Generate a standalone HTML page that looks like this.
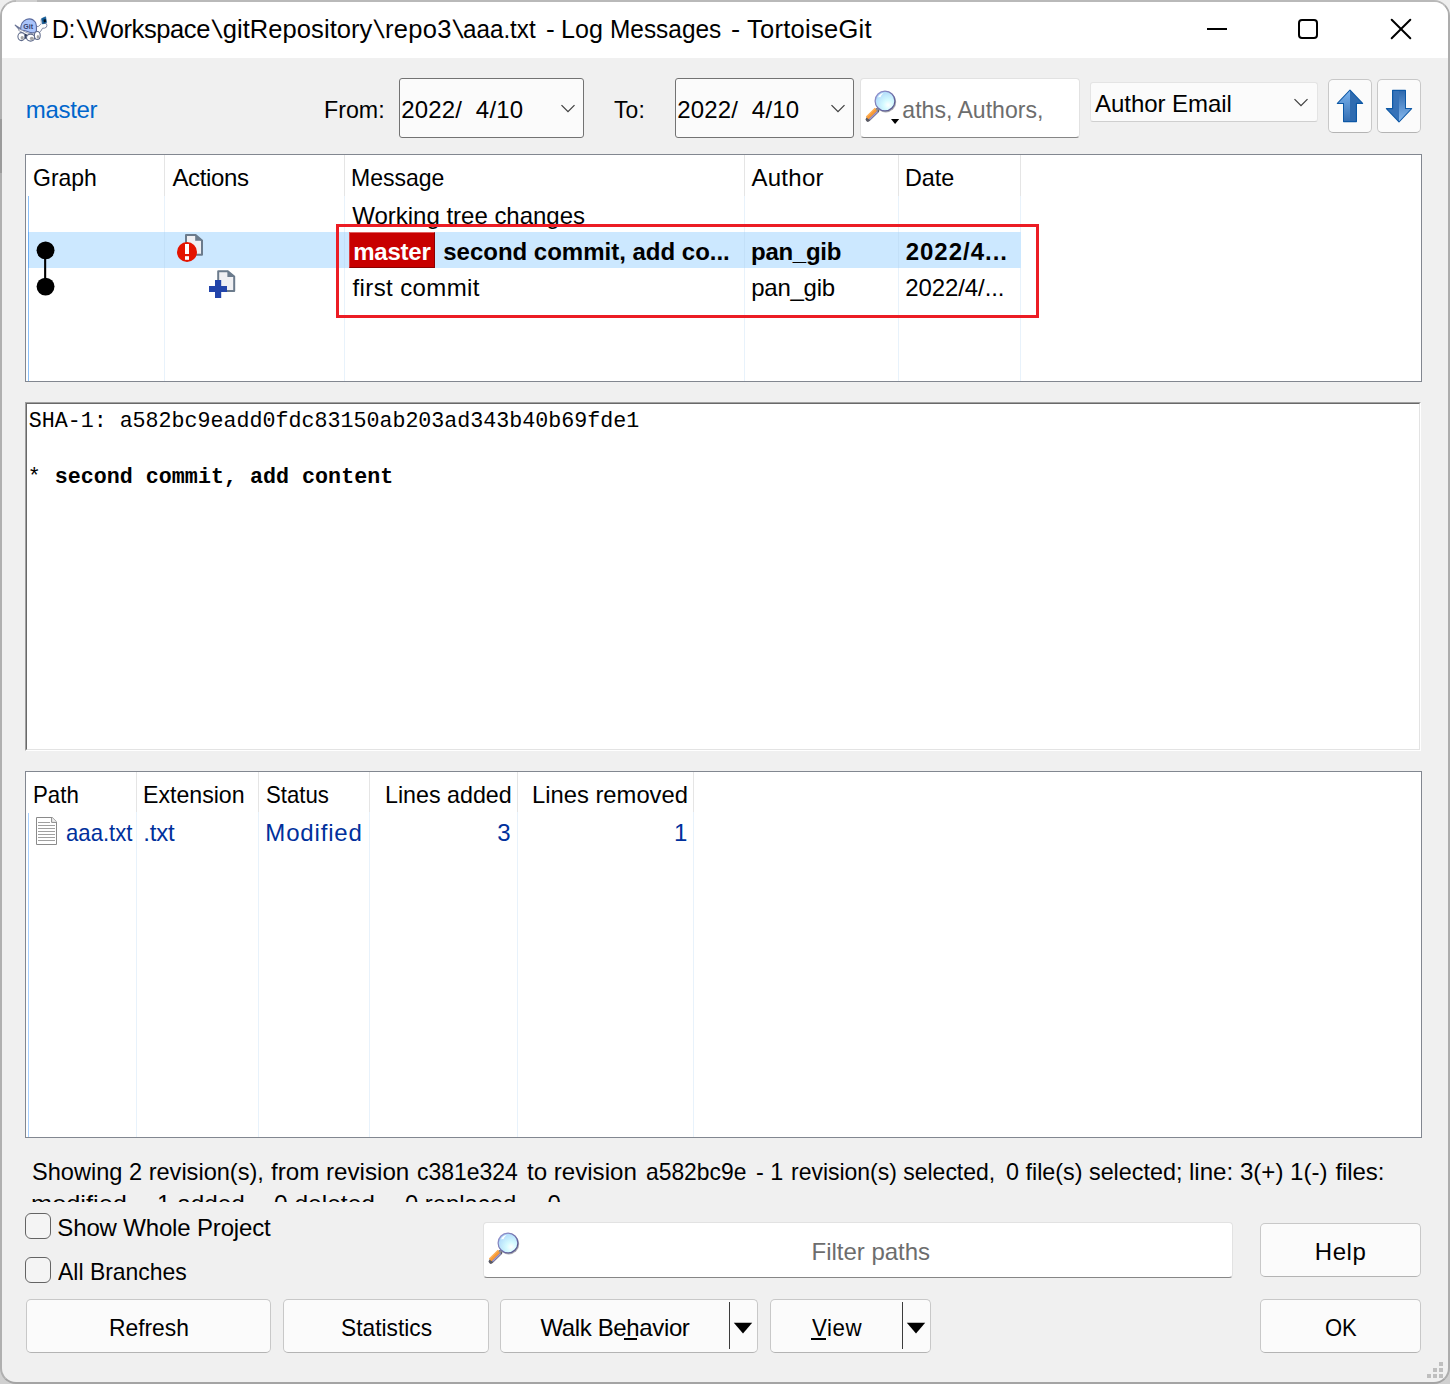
<!DOCTYPE html>
<html lang="en">
<head>
<meta charset="utf-8">
<title>D:\Workspace\gitRepository\repo3\aaa.txt - Log Messages - TortoiseGit</title>
<style>
*{box-sizing:border-box;margin:0;padding:0}
html,body{width:1450px;height:1384px;overflow:hidden}
body{position:relative;background:linear-gradient(180deg,#eeeeee 0%,#e4e4e4 50%,#d0d0d0 100%);font-family:"Liberation Sans",sans-serif;font-size:24px;color:#000}
.a{position:absolute}
.t{position:absolute;white-space:pre;line-height:1;display:block}
.s{font-family:"Liberation Sans",sans-serif}
.m{font-family:"Liberation Mono",monospace}
#win{left:0;top:0;width:1450px;height:1384px;background:#f0f0f0;border:2px solid #b9b9b9;border-right-color:#adadad;border-bottom-color:#a4a4a4;border-left-color:#b0b0b0;border-radius:16px;overflow:hidden}
#titlebar{left:0;top:0;width:1446px;height:56px;background:#fff}
.btn{background:#fbfbfb;border:1px solid #c8c8c8;border-bottom-color:#b4b4b4;border-radius:5px}
.panel{background:#fff;border:1px solid #828790}
.vline{position:absolute;width:1px}
</style>
</head>
<body>
<div id="win" class="a">
  <div id="titlebar" class="a"></div>
</div>


<div class="a" style="left:0;top:119px;width:2px;height:54px;background:#9b9b9b"></div>
<div class="a" style="left:16px;top:0;width:21px;height:2px;background:#cfcfcf"></div>
<!-- app icon -->
<svg class="a" style="left:12px;top:12px" width="40" height="34" viewBox="12 12 40 34">
  <!-- tail -->
  <path d="M15.2 25.2 L21.6 29.2 L20.6 30.8 Z" fill="#e8eaf2" stroke="#6a7496" stroke-width="1.2" stroke-linejoin="round"/>
  <!-- neck + head -->
  <path d="M35.6 26.4 Q38.8 27.6 40.2 24.6 Q41.4 22.8 43.4 23.4 L46.4 23.6 Q47.4 25.4 46.4 27.2 Q44.6 28.6 42.6 28.2 Q41 31.4 38.2 34 L35.6 33 Z" fill="#fdfdfd" stroke="#8088a2" stroke-width="1"/>
  <path d="M36.4 25 V31.4" stroke="#c6c8d0" stroke-width="1.4"/>
  <!-- shell -->
  <path d="M20.6 30 Q20.4 22.2 26.2 19.6 Q31.6 17.4 35.2 22 Q36.8 24.4 36.4 31.6 Q33.4 33.4 29.6 32.2 Q25.4 30.6 20.6 30 Z" fill="#a9c4fb" stroke="#5c6ca0" stroke-width="1.1"/>
  <!-- white belly band -->
  <path d="M18.8 28.8 Q22.6 30.4 26 32.4 Q30 34.6 33.6 33.6 Q36 32.8 37.6 31.4 L38 33.2 Q36 35 33.4 35.6 Q29.6 36.4 25.8 34.4 Q22.4 32.4 18.6 30.4 Z" fill="#fff" stroke="#8a90a6" stroke-width="0.8"/>
  <!-- dark underside -->
  <path d="M24.4 33.6 L28.4 35.6 L27.6 39.4 L25 38.4 Z" fill="#27324e"/>
  <path d="M34.2 35.4 L35.4 38.6 L33.6 39 Z" fill="#27324e"/>
  <!-- legs -->
  <ellipse cx="21.4" cy="36.6" rx="3.5" ry="4" fill="#fff" stroke="#5e6a8a" stroke-width="1.05"/>
  <ellipse cx="30.6" cy="37.6" rx="4.1" ry="3.5" fill="#fff" stroke="#5e6a8a" stroke-width="1.05"/>
  <ellipse cx="37.3" cy="35.5" rx="2.9" ry="4" fill="#fff" stroke="#5e6a8a" stroke-width="1.05"/>
  <ellipse cx="22.2" cy="37.8" rx="1.6" ry="1.9" fill="#a4a4a4"/>
  <ellipse cx="31.8" cy="38.4" rx="2" ry="1.6" fill="#a4a4a4"/>
  <ellipse cx="37.9" cy="36.8" rx="1.2" ry="1.9" fill="#a4a4a4"/>
  <!-- cube -->
  <path d="M40.2 19.8 L41.8 18.6 L42.8 23.6 L41 24.4 Z" fill="#c4c8d6"/>
  <path d="M41.6 18.6 L45.6 16.8 L46.6 22.4 L42.6 24 Z" fill="#10609e" stroke="#0b4c84" stroke-width="0.6"/>
  <path d="M43.4 19.8 L45.6 19 L46 21.8 L43.9 22.6 Z" fill="#020c18"/>
  <text x="23.2" y="28.8" font-family="'Liberation Sans',sans-serif" font-size="7.8" font-weight="700" fill="#36426e" textLength="9.8" lengthAdjust="spacingAndGlyphs">Git</text>
</svg>

<!-- title bar controls -->
<div class="a" style="left:1207px;top:28px;width:20px;height:2px;background:#000"></div>
<div class="a" style="left:1298px;top:19px;width:20px;height:20px;border:2px solid #000;border-radius:4px"></div>
<svg class="a" style="left:1389px;top:17px" width="24" height="24" viewBox="0 0 24 24"><path d="M2.7 2.7 L21.3 21.3 M21.3 2.7 L2.7 21.3" stroke="#000" stroke-width="2" stroke-linecap="round" fill="none"/></svg>

<!-- toolbar row -->
<div class="a" style="left:399px;top:78px;width:185px;height:60px;background:#fbfbfb;border:1px solid #737373;border-radius:3px"></div>
<svg class="a" style="left:559.5px;top:103px" width="16" height="11" viewBox="0 0 16 11"><path d="M1.5 2.1 L8 8.6 L14.5 2.1" stroke="#404040" stroke-width="1.3" fill="none"/></svg>
<div class="a" style="left:675px;top:78px;width:179px;height:60px;background:#fbfbfb;border:1px solid #737373;border-radius:3px"></div>
<svg class="a" style="left:829.5px;top:103px" width="16" height="11" viewBox="0 0 16 11"><path d="M1.5 2.1 L8 8.6 L14.5 2.1" stroke="#404040" stroke-width="1.3" fill="none"/></svg>

<!-- search box -->
<div class="a" id="search" style="left:860px;top:78px;width:220px;height:60px;background:#fff;border:1px solid #e2e2e2;border-bottom:1px solid #868686;border-radius:4px;overflow:hidden">
</div>

<!-- combo -->
<div class="a" style="left:1090px;top:82px;width:228px;height:40px;background:#fbfbfb;border:1px solid #e4e4e4;border-bottom-color:#cfcfcf;border-radius:3px"></div>
<svg class="a" style="left:1293.4px;top:97.2px" width="16" height="11" viewBox="0 0 16 11"><path d="M1.5 2.1 L8 8.6 L14.5 2.1" stroke="#404040" stroke-width="1.3" fill="none"/></svg>

<!-- up/down buttons -->
<div class="a btn" style="left:1328px;top:79px;width:44px;height:54px"></div>
<div class="a btn" style="left:1377px;top:79px;width:44px;height:54px"></div>


<svg class="a" style="left:1328px;top:79px" width="94" height="54" viewBox="1328 79 94 54">
  <defs>
    <linearGradient id="gl" x1="0" y1="0" x2="0" y2="1"><stop offset="0" stop-color="#7ab3ef"/><stop offset="1" stop-color="#356fb3"/></linearGradient>
    <linearGradient id="gd" x1="0" y1="0" x2="0" y2="1"><stop offset="0" stop-color="#2e69ae"/><stop offset="1" stop-color="#86b8ee"/></linearGradient>
  </defs>
  <!-- up -->
  <path d="M1350 90.2 L1362.6 103.4 H1356.4 V121.6 H1343.6 V103.4 H1337.4 Z" fill="#2f6bb0" stroke="#0d58a6" stroke-width="1.2" stroke-linejoin="round"/>
  <path d="M1350 90.8 L1338.4 103 H1344 V121 H1350 Z" fill="url(#gl)"/>
  <!-- down -->
  <path d="M1399 121.8 L1411.6 108.6 H1405.4 V90.4 H1392.6 V108.6 H1386.4 Z" fill="#3672b8" stroke="#0d58a6" stroke-width="1.2" stroke-linejoin="round"/>
  <path d="M1399 121.2 L1410.6 109 H1405 V91 H1399 Z" fill="url(#gd)"/>
</svg>

<!-- log list panel -->
<div class="a panel" id="loglist" style="left:25px;top:154px;width:1397px;height:228px"></div>

<!-- log list column dividers -->
<div class="vline" style="left:164px;top:155px;height:41px;background:#e5e5e5"></div>
<div class="vline" style="left:344px;top:155px;height:41px;background:#e5e5e5"></div>
<div class="vline" style="left:744px;top:155px;height:41px;background:#e5e5e5"></div>
<div class="vline" style="left:898px;top:155px;height:41px;background:#e5e5e5"></div>
<div class="vline" style="left:1020px;top:155px;height:41px;background:#e5e5e5"></div>
<div class="vline" style="left:164px;top:196px;height:185px;background:#e8f2fb"></div>
<div class="vline" style="left:344px;top:196px;height:185px;background:#e8f2fb"></div>
<div class="vline" style="left:744px;top:196px;height:185px;background:#e8f2fb"></div>
<div class="vline" style="left:898px;top:196px;height:185px;background:#e8f2fb"></div>
<div class="vline" style="left:1020px;top:196px;height:185px;background:#e8f2fb"></div>
<div class="vline" style="left:28px;top:196px;height:185px;background:#8cc0f8"></div>
<div class="a" style="left:28px;top:232px;width:993px;height:36px;background:#cce8ff"></div>
<div class="vline" style="left:28px;top:232px;height:36px;background:#6eb0f6"></div>
<div class="vline" style="left:164px;top:232px;height:36px;background:#c3e0f8"></div>
<div class="vline" style="left:344px;top:232px;height:36px;background:#c3e0f8"></div>
<div class="vline" style="left:744px;top:232px;height:36px;background:#c3e0f8"></div>
<div class="vline" style="left:898px;top:232px;height:36px;background:#c3e0f8"></div>
<!-- graph -->
<svg class="a" style="left:30px;top:236px" width="32" height="66" viewBox="0 0 32 66">
  <line x1="15.15" y1="14" x2="15.15" y2="50" stroke="#000" stroke-width="2.1"/>
  <circle cx="15.55" cy="14.35" r="8.95" fill="#000"/>
  <circle cx="15.55" cy="50.6" r="8.95" fill="#000"/>
</svg>
<!-- action icons -->
<svg class="a" style="left:176px;top:232px" width="64" height="70" viewBox="176 232 64 70">
  <!-- modified -->
  <path d="M186 235 H195.6 L202 240.4 V254.8 H186 Z" fill="#f0f0f3" stroke="#6b7b8c" stroke-width="2" stroke-linejoin="round"/>
  <path d="M195.2 234.4 L202.8 240.8 H195.2 Z" fill="#6b7b8c"/>
  <circle cx="187" cy="252" r="10" fill="#e41400"/>
  <rect x="185" y="244" width="4" height="10" fill="#fff"/>
  <rect x="185" y="256.2" width="4" height="3.6" fill="#fff"/>
  <!-- added -->
  <path d="M218.2 271.2 H227.8 L234.2 276.6 V291 H218.2 Z" fill="#f0f0f3" stroke="#6b7b8c" stroke-width="2" stroke-linejoin="round"/>
  <path d="M227.4 270.6 L235 277 H227.4 Z" fill="#6b7b8c"/>
  <rect x="215" y="280" width="6.2" height="18" fill="#2244aa"/>
  <rect x="209" y="286" width="18" height="6" fill="#2244aa"/>
</svg>
<!-- master badge -->
<div class="a" style="left:349px;top:232px;width:86px;height:36px;background:#c80000;border-top:1px solid #e06060;border-left:1px solid #d84040;border-right:1px solid #8c0000;border-bottom:1px solid #8c0000"></div>

<!-- message panel -->
<div class="a" id="msgpanel" style="left:25px;top:402px;width:1396px;height:349px;background:#fff;border:1px solid;border-color:#a0a0a0 #ffffff #ffffff #a0a0a0"><div style="width:100%;height:100%;border:1px solid;border-color:#696969 #e3e3e3 #e3e3e3 #696969"></div></div>

<!-- file list panel -->
<div class="a panel" id="filelist" style="left:25px;top:771px;width:1397px;height:367px"></div>


<div class="vline" style="left:136px;top:772px;height:40px;background:#e5e5e5"></div>
<div class="vline" style="left:258px;top:772px;height:40px;background:#e5e5e5"></div>
<div class="vline" style="left:369px;top:772px;height:40px;background:#e5e5e5"></div>
<div class="vline" style="left:517px;top:772px;height:40px;background:#e5e5e5"></div>
<div class="vline" style="left:693px;top:772px;height:40px;background:#e5e5e5"></div>
<div class="vline" style="left:136px;top:812px;height:325px;background:#e8f2fb"></div>
<div class="vline" style="left:258px;top:812px;height:325px;background:#e8f2fb"></div>
<div class="vline" style="left:369px;top:812px;height:325px;background:#e8f2fb"></div>
<div class="vline" style="left:517px;top:812px;height:325px;background:#e8f2fb"></div>
<div class="vline" style="left:693px;top:812px;height:325px;background:#e8f2fb"></div>
<div class="vline" style="left:28px;top:813px;height:324px;background:#a9d1ff"></div>
<svg class="a" style="left:34px;top:815px" width="26" height="32" viewBox="34 815 26 32">
  <path d="M36.5 817.5 H52.2 L56.5 821.8 V844.5 H36.5 Z" fill="#fff" stroke="#8a8a8a" stroke-width="1"/>
  <path d="M51.6 817.5 V822.4 H56.5" fill="#eee" stroke="#8a8a8a" stroke-width="1"/>
  <g stroke="#a0a0a0" stroke-width="1">
    <line x1="38" y1="822.5" x2="50" y2="822.5"/>
    <line x1="38" y1="825.5" x2="55" y2="825.5"/>
    <line x1="38" y1="828.5" x2="55" y2="828.5"/>
    <line x1="38" y1="831.5" x2="55" y2="831.5"/>
    <line x1="38" y1="834.5" x2="55" y2="834.5"/>
    <line x1="38" y1="837.5" x2="55" y2="837.5"/>
    <line x1="38" y1="840.5" x2="55" y2="840.5"/>
  </g>
</svg>

<!-- bottom -->
<div class="a" style="left:483px;top:1222px;width:750px;height:56px;background:#fff;border:1px solid #e2e2e2;border-bottom:1px solid #868686;border-radius:4px"></div>
<div class="a btn" style="left:1260px;top:1223px;width:161px;height:54px"></div>
<div class="a btn" style="left:26px;top:1299px;width:245px;height:54px"></div>
<div class="a btn" style="left:283px;top:1299px;width:206px;height:54px"></div>
<div class="a btn" style="left:500px;top:1299px;width:258px;height:54px"></div>
<div class="a btn" style="left:770px;top:1299px;width:161px;height:54px"></div>
<div class="a btn" style="left:1260px;top:1299px;width:161px;height:54px"></div>

<div class="a" style="left:25px;top:1213px;width:26px;height:26px;border:1.4px solid #646464;border-radius:6px;background:#f4f4f4"></div>
<div class="a" style="left:25px;top:1257px;width:26px;height:26px;border:1.4px solid #646464;border-radius:6px;background:#f4f4f4"></div>


<svg class="a" style="left:862px;top:88px" width="40" height="38" viewBox="862 88 40 38">
  <defs>
    <radialGradient id="lens" cx="0.66" cy="0.7" r="0.8"><stop offset="0" stop-color="#ffffff"/><stop offset="0.3" stop-color="#d6fbff"/><stop offset="1" stop-color="#a8d4fa"/></radialGradient>
    <linearGradient id="ring" x1="0" y1="0" x2="1" y2="1"><stop offset="0" stop-color="#9a9ad6"/><stop offset="1" stop-color="#4c4c84"/></linearGradient>
    <g id="magn">
      <line x1="877" y1="110.6" x2="868" y2="119.4" stroke="#5a5a64" stroke-width="4.8" stroke-linecap="round"/>
      <line x1="877.6" y1="111.4" x2="869.4" y2="119.4" stroke="#9a96d8" stroke-width="1.6"/>
      <line x1="876.2" y1="109.2" x2="867.2" y2="118" stroke="#f89b38" stroke-width="3.6"/>
      <line x1="875.2" y1="108.2" x2="866.6" y2="116.6" stroke="#ffb45e" stroke-width="1.2"/>
      <line x1="879.2" y1="107.6" x2="876.4" y2="110.4" stroke="#8e8e98" stroke-width="2.6"/>
      <circle cx="885.8" cy="102" r="10.4" fill="#6e6e7a" opacity="0.6"/>
      <circle cx="885" cy="101" r="9.9" fill="url(#lens)" stroke="url(#ring)" stroke-width="1.25"/>
      <path d="M878 97.6 Q879.4 93.6 883.6 93 Q881 95 880.4 97.2 Q879 96.6 878 97.6 Z" fill="#fff"/>
    </g>
  </defs>
  <use href="#magn"/>
  <path d="M891 119 H899.2 L895.1 124 Z" fill="#000"/>
</svg>
<svg class="a" style="left:485px;top:1230.4px" width="38" height="38" viewBox="862 88 38 38">
  <use href="#magn"/>
</svg>


<div class="vline" style="left:729px;top:1302px;height:47px;background:#3c3c3c"></div>
<div class="vline" style="left:902px;top:1302px;height:47px;background:#3c3c3c"></div>
<svg class="a" style="left:733px;top:1322px" width="20" height="13" viewBox="0 0 20 13"><path d="M0.8 0.8 H19.2 L10 11.6 Z" fill="#000"/></svg>
<svg class="a" style="left:906px;top:1322px" width="20" height="13" viewBox="0 0 20 13"><path d="M0.8 0.8 H19.2 L10 11.6 Z" fill="#000"/></svg>
<div class="a" style="left:811px;top:1338px;width:15px;height:1.5px;background:#000"></div>
<div class="a" style="left:624px;top:1338px;width:13px;height:1.5px;background:#000"></div>
<!-- resize grip -->
<svg class="a" style="left:1427px;top:1362px" width="16" height="16" viewBox="0 0 16 16" fill="#bfbfbf">
  <rect x="12" y="0" width="4" height="4"/>
  <rect x="6" y="6" width="4" height="4"/><rect x="12" y="6" width="4" height="4"/>
  <rect x="0" y="12" width="4" height="4"/><rect x="6" y="12" width="4" height="4"/><rect x="12" y="12" width="4" height="4"/>
</svg>

<span class="t s" style="left:52.49px;top:16.81px;font-size:25.5px;font-weight:400;color:#000;letter-spacing:0.000px;transform:scaleX(0.9134);transform-origin:0 0;">D:</span>
<span class="t s" style="left:75.64px;top:16.81px;font-size:25.5px;font-weight:400;color:#000;letter-spacing:0.000px;transform:skewX(11deg) scaleX(1.08);transform-origin:0 0;">\</span>
<span class="t s" style="left:86.50px;top:16.81px;font-size:25.5px;font-weight:400;color:#000;letter-spacing:-0.399px;">Workspace</span>
<span class="t s" style="left:211.33px;top:16.81px;font-size:25.5px;font-weight:400;color:#000;letter-spacing:0.000px;transform:skewX(11deg) scaleX(1.08);transform-origin:0 0;">\</span>
<span class="t s" style="left:222.68px;top:16.81px;font-size:25.5px;font-weight:400;color:#000;letter-spacing:0.072px;">gitRepository</span>
<span class="t s" style="left:373.28px;top:16.81px;font-size:25.5px;font-weight:400;color:#000;letter-spacing:0.000px;transform:skewX(11deg) scaleX(1.08);transform-origin:0 0;">\</span>
<span class="t s" style="left:384.97px;top:16.81px;font-size:25.5px;font-weight:400;color:#000;letter-spacing:0.307px;">repo3</span>
<span class="t s" style="left:452.21px;top:16.81px;font-size:25.5px;font-weight:400;color:#000;letter-spacing:0.000px;transform:skewX(11deg) scaleX(1.08);transform-origin:0 0;">\</span>
<span class="t s" style="left:463.30px;top:16.81px;font-size:25.5px;font-weight:400;color:#000;letter-spacing:0.000px;transform:scaleX(0.9493);transform-origin:0 0;">aaa.txt </span>
<span class="t s" style="left:546.49px;top:16.81px;font-size:25.5px;font-weight:400;color:#000;letter-spacing:0.000px;transform:scaleX(1.0304);transform-origin:0 0;">- </span>
<span class="t s" style="left:561.33px;top:16.81px;font-size:25.5px;font-weight:400;color:#000;letter-spacing:0.000px;transform:scaleX(0.9836);transform-origin:0 0;">Log </span>
<span class="t s" style="left:610.40px;top:16.81px;font-size:25.5px;font-weight:400;color:#000;letter-spacing:0.000px;transform:scaleX(0.9571);transform-origin:0 0;">Messages </span>
<span class="t s" style="left:730.64px;top:16.81px;font-size:25.5px;font-weight:400;color:#000;letter-spacing:0.000px;transform:scaleX(1.0775);transform-origin:0 0;">- </span>
<span class="t s" style="left:747.00px;top:16.81px;font-size:25.5px;font-weight:400;color:#000;letter-spacing:0.263px;">TortoiseGit</span>
<span class="t s" style="left:25.80px;top:98.08px;font-size:24px;font-weight:400;color:#0066cc;letter-spacing:-0.329px;">master</span>
<span class="t s" style="left:324.39px;top:98.08px;font-size:24px;font-weight:400;color:#000;letter-spacing:0.000px;transform:scaleX(0.9667);transform-origin:0 0;">From:</span>
<span class="t s" style="left:401.30px;top:98.08px;font-size:24px;font-weight:400;color:#000;letter-spacing:0.168px;">2022/  4/10</span>
<span class="t s" style="left:613.59px;top:98.08px;font-size:24px;font-weight:400;color:#000;letter-spacing:0.132px;transform:scaleX(0.9518);transform-origin:0 0;">To:</span>
<span class="t s" style="left:677.30px;top:98.08px;font-size:24px;font-weight:400;color:#000;letter-spacing:0.168px;">2022/  4/10</span>
<span class="t s" style="left:887.39px;top:98.08px;font-size:24px;font-weight:400;color:#6d6d6d;letter-spacing:0.000px;clip-path:inset(-5px -5px -5px 15.5px);transform:scaleX(0.9604);transform-origin:0 0;">Paths, Authors,</span>
<span class="t s" style="left:1095.12px;top:92.08px;font-size:24px;font-weight:400;color:#000;letter-spacing:-0.065px;">Author Email</span>
<span class="t s" style="left:33.29px;top:166.08px;font-size:24px;font-weight:400;color:#000;letter-spacing:0.000px;transform:scaleX(0.9579);transform-origin:0 0;">Graph</span>
<span class="t s" style="left:172.45px;top:166.08px;font-size:24px;font-weight:400;color:#000;letter-spacing:-0.353px;">Actions</span>
<span class="t s" style="left:351.38px;top:166.08px;font-size:24px;font-weight:400;color:#000;letter-spacing:0.000px;transform:scaleX(0.9593);transform-origin:0 0;">Message</span>
<span class="t s" style="left:751.45px;top:166.08px;font-size:24px;font-weight:400;color:#000;letter-spacing:0.276px;">Author</span>
<span class="t s" style="left:905.49px;top:166.08px;font-size:24px;font-weight:400;color:#000;letter-spacing:0.000px;transform:scaleX(0.9736);transform-origin:0 0;">Date</span>
<span class="t s" style="left:352.29px;top:204.08px;font-size:24px;font-weight:400;color:#000;letter-spacing:-0.014px;">Working tree changes</span>
<span class="t s" style="left:353.23px;top:240.08px;font-size:24px;font-weight:700;color:#fff;letter-spacing:-0.229px;">master</span>
<span class="t s" style="left:443.23px;top:240.08px;font-size:24px;font-weight:700;color:#000;letter-spacing:-0.007px;">second commit, add co...</span>
<span class="t s" style="left:751.10px;top:240.08px;font-size:24px;font-weight:700;color:#000;letter-spacing:-0.297px;">pan_gib</span>
<span class="t s" style="left:905.66px;top:240.08px;font-size:24px;font-weight:700;color:#000;letter-spacing:0.994px;">2022/4...</span>
<span class="t s" style="left:352.48px;top:276.08px;font-size:24px;font-weight:400;color:#000;letter-spacing:0.396px;">first commit</span>
<span class="t s" style="left:751.16px;top:276.08px;font-size:24px;font-weight:400;color:#000;letter-spacing:-0.232px;">pan_gib</span>
<span class="t s" style="left:905.35px;top:276.08px;font-size:24px;font-weight:400;color:#000;letter-spacing:-0.110px;">2022/4/...</span>
<span class="t m" style="left:28.71px;top:410.79px;font-size:21.67px;font-weight:400;color:#000;letter-spacing:-0.007px;">SHA-1: a582bc9eadd0fdc83150ab203ad343b40b69fde1</span>
<span class="t m" style="left:27.70px;top:466.79px;font-size:21.67px;font-weight:400;color:#000;letter-spacing:0.000px;">* </span>
<span class="t m" style="left:54.63px;top:466.79px;font-size:21.67px;font-weight:700;color:#000;letter-spacing:0.027px;">second commit, add content</span>
<span class="t s" style="left:33.30px;top:783.08px;font-size:24px;font-weight:400;color:#000;letter-spacing:0.000px;transform:scaleX(0.9272);transform-origin:0 0;">Path</span>
<span class="t s" style="left:143.46px;top:783.08px;font-size:24px;font-weight:400;color:#000;letter-spacing:0.000px;transform:scaleX(0.9638);transform-origin:0 0;">Extension</span>
<span class="t s" style="left:265.54px;top:783.08px;font-size:24px;font-weight:400;color:#000;letter-spacing:0.000px;transform:scaleX(0.9249);transform-origin:0 0;">Status</span>
<span class="t s" style="left:384.66px;top:783.08px;font-size:24px;font-weight:400;color:#000;letter-spacing:0.000px;transform:scaleX(0.9687);transform-origin:0 0;">Lines added</span>
<span class="t s" style="left:532.36px;top:783.08px;font-size:24px;font-weight:400;color:#000;letter-spacing:0.000px;transform:scaleX(0.9906);transform-origin:0 0;">Lines removed</span>
<span class="t s" style="left:65.55px;top:821.08px;font-size:24px;font-weight:400;color:#00309c;letter-spacing:0.000px;transform:scaleX(0.9227);transform-origin:0 0;">aaa.txt</span>
<span class="t s" style="left:143.22px;top:821.08px;font-size:24px;font-weight:400;color:#00309c;letter-spacing:-0.170px;">.txt</span>
<span class="t s" style="left:265.36px;top:821.08px;font-size:24px;font-weight:400;color:#00309c;letter-spacing:0.825px;">Modified</span>
<span class="t s" style="left:497.27px;top:821.08px;font-size:24px;font-weight:400;color:#00309c;letter-spacing:0.000px;">3</span>
<span class="t s" style="left:673.89px;top:821.08px;font-size:24px;font-weight:400;color:#00309c;letter-spacing:0.000px;">1</span>
<span class="t s" style="left:31.64px;top:1160.08px;font-size:24px;font-weight:400;color:#000;letter-spacing:0.000px;transform:scaleX(0.9822);transform-origin:0 0;">Showing 2 revision(s), </span>
<span class="t s" style="left:270.54px;top:1160.08px;font-size:24px;font-weight:400;color:#000;letter-spacing:0.000px;transform:scaleX(1.0068);transform-origin:0 0;">from revision </span>
<span class="t s" style="left:417.35px;top:1160.08px;font-size:24px;font-weight:400;color:#000;letter-spacing:0.000px;transform:scaleX(0.9568);transform-origin:0 0;">c381e324 </span>
<span class="t s" style="left:527.47px;top:1160.08px;font-size:24px;font-weight:400;color:#000;letter-spacing:0.000px;transform:scaleX(1.0039);transform-origin:0 0;">to revision </span>
<span class="t s" style="left:645.68px;top:1160.08px;font-size:24px;font-weight:400;color:#000;letter-spacing:0.000px;transform:scaleX(0.952);transform-origin:0 0;">a582bc9e </span>
<span class="t s" style="left:755.64px;top:1160.08px;font-size:24px;font-weight:400;color:#000;letter-spacing:0.000px;transform:scaleX(0.9751);transform-origin:0 0;">- 1 </span>
<span class="t s" style="left:791.37px;top:1160.08px;font-size:24px;font-weight:400;color:#000;letter-spacing:0.000px;transform:scaleX(0.9567);transform-origin:0 0;">revision(s) selected, </span>
<span class="t s" style="left:1005.59px;top:1160.08px;font-size:24px;font-weight:400;color:#000;letter-spacing:0.000px;transform:scaleX(0.9722);transform-origin:0 0;">0 file(s) selected; </span>
<span class="t s" style="left:1189.37px;top:1160.08px;font-size:24px;font-weight:400;color:#000;letter-spacing:0.000px;transform:scaleX(1.0041);transform-origin:0 0;">line: 3(+) 1(-) </span>
<span class="t s" style="left:1335.48px;top:1160.08px;font-size:24px;font-weight:400;color:#000;letter-spacing:-0.082px;">files:</span>
<span class="t s" style="left:31.47px;top:1192.08px;font-size:24px;font-weight:400;color:#000;letter-spacing:0.000px;clip-path:inset(0 0 14.1px 0);transform:scaleX(1.057);transform-origin:0 0;">modified </span>
<span class="t s" style="left:135.47px;top:1196.08px;font-size:24px;font-weight:400;color:#000;letter-spacing:0.000px;clip-path:inset(0 0 18.1px 0);transform:scaleX(1.0274);transform-origin:0 0;">= </span>
<span class="t s" style="left:157.33px;top:1192.08px;font-size:24px;font-weight:400;color:#000;letter-spacing:0.000px;clip-path:inset(0 0 14.1px 0);transform:scaleX(1.011);transform-origin:0 0;">1 added </span>
<span class="t s" style="left:252.47px;top:1196.08px;font-size:24px;font-weight:400;color:#000;letter-spacing:0.000px;clip-path:inset(0 0 18.1px 0);transform:scaleX(1.0274);transform-origin:0 0;">= </span>
<span class="t s" style="left:274.32px;top:1192.08px;font-size:24px;font-weight:400;color:#000;letter-spacing:0.000px;clip-path:inset(0 0 14.1px 0);transform:scaleX(1.0219);transform-origin:0 0;">0 deleted </span>
<span class="t s" style="left:382.47px;top:1196.08px;font-size:24px;font-weight:400;color:#000;letter-spacing:0.000px;clip-path:inset(0 0 18.1px 0);transform:scaleX(1.0274);transform-origin:0 0;">= </span>
<span class="t s" style="left:404.65px;top:1192.08px;font-size:24px;font-weight:400;color:#000;letter-spacing:0.000px;clip-path:inset(0 0 14.1px 0);transform:scaleX(0.9918);transform-origin:0 0;">0 replaced </span>
<span class="t s" style="left:524.47px;top:1196.08px;font-size:24px;font-weight:400;color:#000;letter-spacing:0.000px;clip-path:inset(0 0 18.1px 0);transform:scaleX(1.0274);transform-origin:0 0;">= </span>
<span class="t s" style="left:547.41px;top:1192.08px;font-size:24px;font-weight:400;color:#000;letter-spacing:0.000px;clip-path:inset(0 0 14.1px 0);">0</span>
<span class="t s" style="left:57.35px;top:1216.08px;font-size:24px;font-weight:400;color:#000;letter-spacing:-0.162px;">Show Whole Project</span>
<span class="t s" style="left:58.35px;top:1260.08px;font-size:24px;font-weight:400;color:#000;letter-spacing:0.000px;transform:scaleX(0.9563);transform-origin:0 0;">All Branches</span>
<span class="t s" style="left:811.60px;top:1240.08px;font-size:24px;font-weight:400;color:#6d6d6d;letter-spacing:-0.021px;">Filter paths</span>
<span class="t s" style="left:1314.83px;top:1240.08px;font-size:24px;font-weight:400;color:#000;letter-spacing:0.518px;">Help</span>
<span class="t s" style="left:108.64px;top:1316.08px;font-size:24px;font-weight:400;color:#000;letter-spacing:0.000px;transform:scaleX(0.9507);transform-origin:0 0;">Refresh</span>
<span class="t s" style="left:340.52px;top:1316.08px;font-size:24px;font-weight:400;color:#000;letter-spacing:0.000px;transform:scaleX(0.9487);transform-origin:0 0;">Statistics</span>
<span class="t s" style="left:540.43px;top:1316.08px;font-size:24px;font-weight:400;color:#000;letter-spacing:-0.366px;">Walk Behavior</span>
<span class="t s" style="left:812.05px;top:1316.08px;font-size:24px;font-weight:400;color:#000;letter-spacing:0.562px;transform:scaleX(0.9287);transform-origin:0 0;">View</span>
<span class="t s" style="left:1324.61px;top:1316.08px;font-size:24px;font-weight:400;color:#000;letter-spacing:0.000px;transform:scaleX(0.9163);transform-origin:0 0;">OK</span>
<!-- red annotation -->
<div class="a" style="left:336px;top:224px;width:703px;height:94px;border:3px solid #ec1c24"></div>
</body>
</html>
